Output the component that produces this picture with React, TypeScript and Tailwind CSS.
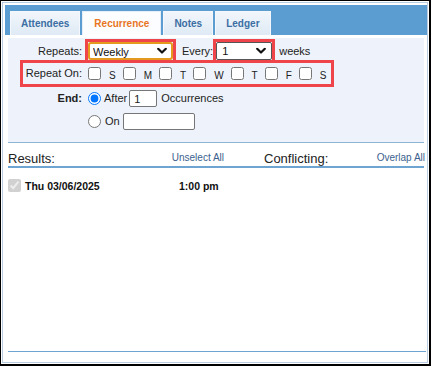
import React from 'react';

const tabs = ['Attendees', 'Recurrence', 'Notes', 'Ledger'];
const days = ['S', 'M', 'T', 'W', 'T', 'F', 'S'];

function Chevron() {
  return (
    <svg width="10" height="7" viewBox="0 0 10 7" className="absolute right-[6px] top-1/2 -translate-y-1/2 pointer-events-none">
      <path d="M1.2 1.3 L5 5 L8.8 1.3" fill="none" stroke="#111" strokeWidth="2.2" strokeLinecap="round" strokeLinejoin="round" />
    </svg>
  );
}

export default function App() {
  return (
    <div className="w-[431px] h-[366px] bg-white border-l border-t border-r-2 border-b-2 border-black p-px font-['Liberation_Sans',Arial,sans-serif] text-[#222]">
      <div className="h-full flex flex-col border border-[#b8cde2] pl-[2px] pt-[2px]">
        {/* tab strip */}
        <div className="h-[30px] shrink-0 bg-[#5c9dd1] flex items-end gap-[2px] pl-[5px]">
          {tabs.map((t) => {
            const active = t === 'Recurrence';
            return (
              <div
                key={t}
                className={
                  active
                    ? 'h-[24px] px-[11px] flex items-center bg-[#fcfdfe] border border-b-0 border-[#e6eef7] text-[10px] font-bold text-[#e8761f]'
                    : 'h-[24px] px-[10px] flex items-center bg-gradient-to-b from-[#f1f6fb] to-[#dfeaf5] border border-b-0 border-[#f4f8fc] text-[10px] font-bold text-[#3c6ea3]'
                }
              >
                {t}
              </div>
            );
          })}
        </div>

        <div className="mx-[3px] flex-1 flex flex-col">
          {/* recurrence form */}
          <div className="mt-[3px] h-[105px] shrink-0 bg-[#eef3fb] border-b border-[#8fb3d3] pt-px text-[11px]">
            <div className="flex items-center">
              <span className="w-[74px] text-right">Repeats:</span>
              <div className="ml-[3px] border-[3px] border-[#ef444a]">
                <div className="relative w-[85px] h-[18px]">
                  <select className="appearance-none w-full h-full bg-white border-2 border-[#e49a1f] rounded-[3px] pl-[3px] text-[11px] text-[#111] outline-none">
                    <option>Weekly</option>
                  </select>
                  <Chevron />
                </div>
              </div>
              <span className="ml-[6px]">Every:</span>
              <div className="border-[3px] border-[#ef444a]">
                <div className="relative w-[56px] h-[18px]">
                  <select className="appearance-none w-full h-full bg-white border border-[#555] rounded-[2px] pl-[5px] text-[11px] text-[#111] outline-none">
                    <option>1</option>
                  </select>
                  <Chevron />
                </div>
              </div>
              <span className="ml-[4px]">weeks</span>
            </div>

            <div className="-mt-[3px] ml-[12px] w-[314px] border-[3px] border-[#ef444a] h-[27px] flex items-center">
              <span className="w-[59px] text-right">Repeat On:</span>
              <div className="ml-[6px] flex items-center gap-[7px]">
                {days.map((d, i) => (
                  <label key={i} className="flex items-center">
                    <input type="checkbox" className="w-[13px] h-[13px] m-0" />
                    <span className="ml-[8px] mt-[5px] text-[10px] leading-none">{d}</span>
                  </label>
                ))}
              </div>
            </div>

            <div className="mt-[2px] h-[19px] flex items-center">
              <span className="w-[74px] text-right font-bold">End:</span>
              <input type="radio" name="end" defaultChecked className="ml-[6px] w-[13px] h-[13px] m-0" />
              <span className="ml-[3px]">After</span>
              <input type="text" defaultValue="1" className="ml-[2px] w-[28px] h-[17px] bg-white border border-[#767676] rounded-[2px] pl-[4px] text-[11px] outline-none" />
              <span className="ml-[4px]">Occurrences</span>
            </div>

            <div className="mt-[4px] h-[19px] flex items-center">
              <span className="w-[74px]" />
              <input type="radio" name="end" className="ml-[6px] w-[13px] h-[13px] m-0" />
              <span className="ml-[4px]">On</span>
              <input type="text" className="ml-[3px] w-[72px] h-[17px] bg-white border border-[#767676] rounded-[2px] outline-none" />
            </div>
          </div>

          {/* results */}
          <div className="h-[25px] shrink-0 flex items-end border-b-2 border-[#6ea4d2]">
            <div className="w-[216px] flex items-end justify-between">
              <span className="text-[13px] leading-[15px]">Results:</span>
              <span className="mb-[3px] text-[10px] leading-none text-[#3b5f8e]">Unselect All</span>
            </div>
            <div className="flex-1 flex items-end justify-between">
              <span className="ml-[40px] text-[13px] leading-[15px]">Conflicting:</span>
              <span className="mb-[3px] -mr-px text-[10px] leading-none text-[#3b5f8e]">Overlap All</span>
            </div>
          </div>

          <div className="flex-1 border-b border-[#6ea4d2] mb-[10px] -mr-[2px]">
            <div className="mt-[8px] flex items-center text-[10.5px] font-bold text-[#111]">
              <input type="checkbox" defaultChecked disabled className="w-[13px] h-[13px] m-0" />
              <span className="ml-[4px] pt-[3px] w-[154px]">Thu 03/06/2025</span>
              <span className="pt-[3px]">1:00 pm</span>
            </div>
          </div>
        </div>
      </div>
    </div>
  );
}
